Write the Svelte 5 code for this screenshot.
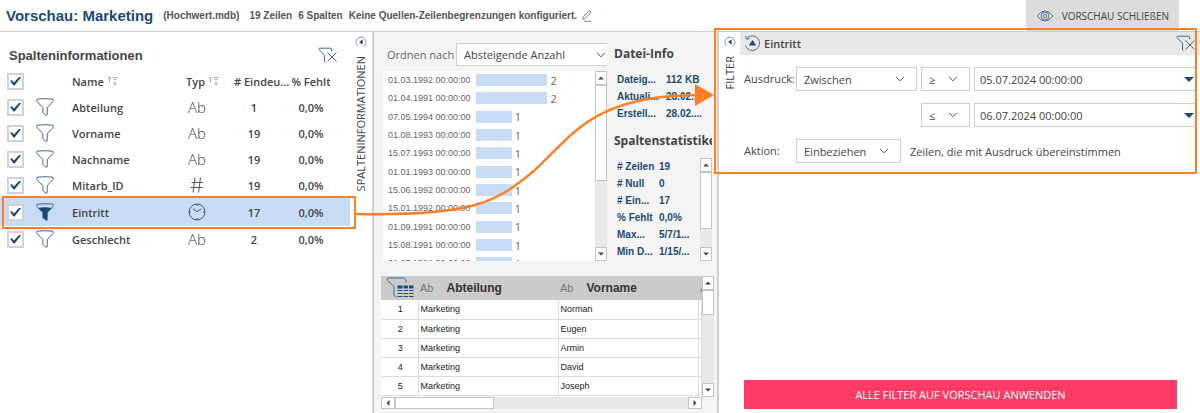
<script lang="ts">
  type Kind = 'text' | 'number' | 'date';

  let columns = $state([
    { name: 'Abteilung', kind: 'text' as Kind, unique: 1, missing: '0,0%', checked: true },
    { name: 'Vorname', kind: 'text' as Kind, unique: 19, missing: '0,0%', checked: true },
    { name: 'Nachname', kind: 'text' as Kind, unique: 19, missing: '0,0%', checked: true },
    { name: 'Mitarb_ID', kind: 'number' as Kind, unique: 19, missing: '0,0%', checked: true },
    { name: 'Eintritt', kind: 'date' as Kind, unique: 17, missing: '0,0%', checked: true },
    { name: 'Geschlecht', kind: 'text' as Kind, unique: 2, missing: '0,0%', checked: true },
  ]);
  let all_checked = $state(true);
  let selected = $state('Eintritt');
  let from_date = $state('05.07.2024 00:00:00');
  let to_date = $state('06.07.2024 00:00:00');

  const histogram = [
    { label: '01.03.1992 00:00:00', count: 2 },
    { label: '01.04.1991 00:00:00', count: 2 },
    { label: '07.05.1994 00:00:00', count: 1 },
    { label: '01.08.1993 00:00:00', count: 1 },
    { label: '15.07.1993 00:00:00', count: 1 },
    { label: '01.01.1993 00:00:00', count: 1 },
    { label: '15.06.1992 00:00:00', count: 1 },
    { label: '15.01.1992 00:00:00', count: 1 },
    { label: '01.09.1991 00:00:00', count: 1 },
    { label: '15.08.1991 00:00:00', count: 1 },
    { label: '01.07.1991 00:00:00', count: 1 },
  ];
  const max_count = 2;

  const file_info = [
    ['Dateig...', '112 KB'],
    ['Aktuali...', '28.02....'],
    ['Erstell...', '28.02....'],
  ];
  const stats = [
    ['# Zeilen', '19'],
    ['# Null', '0'],
    ['# Ein...', '17'],
    ['% Fehlt', '0,0%'],
    ['Max...', '5/7/1...'],
    ['Min D...', '1/15/...'],
  ];
  const people = ['Norman', 'Eugen', 'Armin', 'David', 'Joseph'];

  function toggleAll() {
    columns.forEach((c) => (c.checked = all_checked));
  }
</script>

{#snippet funnel(filled: boolean)}
  <svg class="funnel" viewBox="0 0 18 18" width="18" height="18">
    <path d="M1 1.2Q9 .2 17 1.2Q17.8 2.6 16.8 3.8L11.2 9.6V16.8Q11 17.6 10 17.2L7.4 15.2Q6.9 14.8 6.9 14V9.6L1.2 3.8Q.2 2.6 1 1.2Z" fill="none" stroke="#3f678f" />
    {#if filled}
      <path d="M2.2 5Q9 3.6 15.8 5L11.2 9.6V17.4L6.9 14.8V9.6Z" fill="#1c4a75" />
    {/if}
  </svg>
{/snippet}

{#snippet clearFilter()}
  <svg viewBox="0 0 20 17" width="20" height="17" fill="none" stroke="#45688c">
    <path d="M13.6 4.2V2Q13.4 1.2 12 1.2H1.6Q.8 1.2 1 2.6L6.5 8.2V14.8L7.5 15.6" />
    <path d="M9.5 5.5L18.5 14.5M18.5 5.5L9.5 14.5" />
  </svg>
{/snippet}

{#snippet sortIcon()}
  <svg class="sort" viewBox="0 0 12 10" width="12" height="10" fill="none" stroke="#8a9bad">
    <path d="M2.5 6.5V1M.8 2.7L2.5 1L4.2 2.7M5.5 1.5H10.5M6.5 3.5H9.5M8 5V9M6.3 7.3L8 9L9.7 7.3" stroke-width=".8" />
  </svg>
{/snippet}

{#snippet collapse(label: string)}
  <div class="strip">
    <button class="plain" aria-label={label}>
      <svg viewBox="0 0 12 12" width="12" height="12">
        <path d="M3 10.2A5 5 0 1 1 8.6 10.4" fill="none" stroke="#8398ad" />
        <path d="M7.6 3.2V8.8L4.2 6Z" fill="#1c4a75" />
      </svg>
    </button>
    <span>{label}</span>
  </div>
{/snippet}

{#snippet chevron()}
  <svg class="chevron" viewBox="0 0 10 6" width="10" height="6" fill="none" stroke="#555">
    <path d="M1 .8L5 4.8L9 .8" />
  </svg>
{/snippet}

{#snippet scrollbar(kind: string)}
  <div class="scrollbar {kind}" aria-hidden="true">
    <span class="cap"><svg viewBox="0 0 8 8" width="8" height="8"><path d="M1 5.5H7L4 2.5Z" fill="#444" /></svg></span>
    <span class="thumb"></span>
    <span class="cap end"><svg viewBox="0 0 8 8" width="8" height="8"><path d="M1 2.5H7L4 5.5Z" fill="#444" /></svg></span>
  </div>
{/snippet}

<div class="page">
  <header>
    <h1>Vorschau: Marketing</h1>
    <span class="file">(Hochwert.mdb)</span>
    <span class="rows">19 Zeilen</span>
    <span class="cols">6 Spalten</span>
    <span>Keine Quellen-Zeilenbegrenzungen konfiguriert.</span>
    <button class="plain edit" aria-label="Begrenzung bearbeiten">
      <svg viewBox="0 0 11 12" width="11" height="12" fill="none" stroke="#5b7b9c">
        <path d="M1.5 9.5L2.2 6.8L7.8 1.2Q8.6.6 9.4 1.3Q10.2 2.2 9.4 3L3.9 8.6L1.5 9.5M3 11.3H10" stroke-width=".9" />
      </svg>
    </button>
    <button class="close">
      <svg viewBox="0 0 18 12" width="18" height="12" fill="none" stroke="#54779b">
        <path d="M1 6Q4.6 1 9 1T17 6Q13.4 11 9 11T1 6Z" />
        <circle cx="9" cy="6" r="4" />
        <circle cx="9" cy="6" r="1.8" />
      </svg>
      VORSCHAU SCHLIEßEN
    </button>
  </header>

  <main>
    <section class="columns">
      <div class="columns-body">
        <div class="columns-title">
          <h2>Spalteninformationen</h2>
          <button class="plain" aria-label="Filter entfernen">{@render clearFilter()}</button>
        </div>
        <table class="column-table">
          <colgroup>
            <col class="c-check" /><col class="c-filter" /><col class="c-name" /><col class="c-type" /><col class="c-unique" /><col class="c-missing" /><col />
          </colgroup>
          <thead>
            <tr>
              <td><input type="checkbox" aria-label="Alle Spalten" bind:checked={all_checked} onchange={toggleAll} /></td>
              <td></td>
              <th class="name">Name {@render sortIcon()}</th>
              <th class="type">Typ {@render sortIcon()}</th>
              <th class="unique">#&nbsp;Eindeu...</th>
              <th>% Fehlt</th>
              <td></td>
            </tr>
          </thead>
          <tbody>
            {#each columns as c}
              <tr class:selected={c.name === selected} onclick={() => (selected = c.name)}>
                <td>
                  <input type="checkbox" aria-label={c.name} bind:checked={c.checked} />
                  {#if c.name === selected}<span class="callout"></span>{/if}
                </td>
                <td>{@render funnel(c.name === selected)}</td>
                <td class="name">{c.name}</td>
                <td class="kind">
                  {#if c.kind === 'text'}
                    Ab
                  {:else if c.kind === 'number'}
                    <svg viewBox="0 0 14 16" width="14" height="16" fill="none" stroke="#555">
                      <path d="M5 .5L3 15.5M10.5 .5L8.5 15.5M1.5 5.5H13M.5 10.5H12.5" />
                    </svg>
                  {:else}
                    <svg viewBox="0 0 18 18" width="18" height="18" fill="none" stroke="#44566b">
                      <circle cx="9" cy="9" r="8" />
                      <path d="M5 5.8L9 8.8L13 6M9 1V3M9 15V17M1 9H3M15 9H17" />
                    </svg>
                  {/if}
                </td>
                <td>{c.unique}</td>
                <td>{c.missing}</td>
                <td></td>
              </tr>
            {/each}
          </tbody>
        </table>
      </div>
      {@render collapse('SPALTENINFORMATIONEN')}
    </section>

    <section class="details">
      <div class="upper">
        <div class="chart">
          <div class="order">
            <label for="order">Ordnen nach</label>
            <div class="select">
              <select id="order"><option>Absteigende Anzahl</option></select>
              {@render chevron()}
            </div>
          </div>
          <div class="histogram">
            <div class="bars">
              {#each histogram as h}
                <div class="bar-row">
                  <span class="bar-label">{h.label}</span>
                  <span class="track">
                    <span class="bar" style="width: {(h.count / max_count) * 60}%"></span>
                    {h.count}
                  </span>
                </div>
              {/each}
            </div>
            {@render scrollbar('chart-scroll')}
          </div>
        </div>

        <div class="info">
          <h3>Datei-Info</h3>
          <table class="facts file-facts">
            <tbody>
              {#each file_info as [key, value]}
                <tr><th>{key}</th><td>{value}</td></tr>
              {/each}
            </tbody>
          </table>
          <h3>Spaltenstatistiken</h3>
          <div class="stats">
            <table class="facts">
              <tbody>
                {#each stats as [key, value]}
                  <tr><th>{key}</th><td>{value}</td></tr>
                {/each}
              </tbody>
            </table>
            {@render scrollbar('stats-scroll')}
          </div>
        </div>
      </div>

      <div class="preview">
        <div class="preview-clip">
          <table class="preview-table">
            <colgroup><col class="p-index" /><col class="p-wide" /><col class="p-wide" /><col /></colgroup>
            <thead>
              <tr>
                <th class="corner">
                  <svg viewBox="0 0 28 22" width="28" height="22">
                    <path d="M20 5.5Q20.5 1.5 18 1H2.5Q.5 1 1.2 3L8 9.5V18L10 20.5" fill="none" stroke="#3f678f" />
                    <path d="M11.5 8.5H16.5V11.5H11.5ZM17.5 8.5H22V11.5H17.5ZM23 8.5H27.5V11.5H23Z" fill="#1c4a75" />
                    <path d="M11.5 13.5H16.5M17.5 13.5H22M23 13.5H27.5M11.5 16.5H16.5M17.5 16.5H22M23 16.5H27.5M11.5 19.5H16.5M17.5 19.5H22M23 19.5H27.5" stroke="#1c4a75" />
                  </svg>
                </th>
                <th><span>Ab</span>Abteilung</th>
                <th><span>Ab</span>Vorname</th>
                <th><span>Ab</span></th>
              </tr>
            </thead>
            <tbody>
              {#each people as person, i}
                <tr><td class="index">{i + 1}</td><td>Marketing</td><td>{person}</td><td></td></tr>
              {/each}
            </tbody>
          </table>
        </div>
        {@render scrollbar('table-scroll')}
        <div class="scrollbar horizontal" aria-hidden="true">
          <span class="cap"><svg viewBox="0 0 8 8" width="8" height="8"><path d="M5.5 1V7L2.5 4Z" fill="#444" /></svg></span>
          <span class="thumb"></span>
          <span class="cap end"><svg viewBox="0 0 8 8" width="8" height="8"><path d="M2.5 1V7L5.5 4Z" fill="#444" /></svg></span>
        </div>
      </div>
    </section>

    <section class="filter">
      {@render collapse('FILTER')}
      <div class="filter-body">
        <div class="filter-title">
          <button class="plain" aria-label="Zuklappen">
            <svg viewBox="0 0 17 17" width="17" height="17">
              <path d="M2.6 3.6A7.3 7.3 0 1 1 1.4 10.5M1.5 1.2L2.4 4.2L5.6 3.6" fill="none" stroke="#54708f" />
              <path d="M8.5 5L12.2 10.5H4.8Z" fill="#1c4a75" />
            </svg>
          </button>
          <h2>Eintritt</h2>
          <button class="plain" aria-label="Filter entfernen">{@render clearFilter()}</button>
        </div>
        <form onsubmit={(e) => e.preventDefault()}>
          <label for="expression">Ausdruck:</label>
          <div class="fields">
            <div class="select">
              <select id="expression"><option>Zwischen</option></select>
              {@render chevron()}
            </div>
            <div class="select">
              <select aria-label="Untere Grenze"><option>≥</option></select>
              {@render chevron()}
            </div>
            <div class="select date">
              <input aria-label="Von" bind:value={from_date} />
              <svg class="chevron" viewBox="0 0 10 5" width="10" height="5"><path d="M0 0H10L5 5Z" fill="#1c4a75" /></svg>
            </div>
            <div class="select second">
              <select aria-label="Obere Grenze"><option>≤</option></select>
              {@render chevron()}
            </div>
            <div class="select date">
              <input aria-label="Bis" bind:value={to_date} />
              <svg class="chevron" viewBox="0 0 10 5" width="10" height="5"><path d="M0 0H10L5 5Z" fill="#1c4a75" /></svg>
            </div>
          </div>
          <label for="action">Aktion:</label>
          <div class="action">
            <div class="select">
              <select id="action"><option>Einbeziehen</option></select>
              {@render chevron()}
            </div>
            <span>Zeilen, die mit Ausdruck übereinstimmen</span>
          </div>
        </form>
        <button class="apply">ALLE FILTER AUF VORSCHAU ANWENDEN</button>
      </div>
      <span class="callout"></span>
    </section>

    <!-- arrow from the selected column to its filter -->
    <svg class="arrow" viewBox="0 0 360 140" width="360" height="140">
      <path d="M0 134C114 136 139 124 179 90C219 52 239 16 341 15" fill="none" stroke="#ff7f27" stroke-width="2.4" />
      <path d="M339 4L358 15L339 26Z" fill="#ff7f27" />
    </svg>
  </main>
</div>

<style>
  :global(body) {
    margin: 0;
    background: #fff;
  }
  .page {
    --blue: #1c4a75;
    --bar: #c8ddf5;
    --orange: #ff7f27;
    --line: #cfcfcf;
    min-height: 100vh;
    display: flex;
    flex-direction: column;
    font-family: "Open Sans", "Noto Sans", sans-serif;
    font-size: 11px;
    color: #444;
    overflow: hidden;
  }
  h1, h2, h3 {
    margin: 0;
  }
  table {
    border-collapse: collapse;
    border-spacing: 0;
  }
  td, th {
    padding: 0;
  }
  button, select, input {
    font: inherit;
    color: inherit;
  }
  svg {
    display: block;
    flex: none;
  }
  .plain {
    border: 0;
    padding: 0;
    background: none;
  }

  header {
    display: flex;
    align-items: center;
    height: 32px;
    padding-left: 6px;
    border-bottom: 1px solid var(--line);
    box-sizing: border-box;
    font-family: "Liberation Sans", Arial, sans-serif;
    font-size: 10px;
    font-weight: 700;
    color: #555;
    white-space: nowrap;
  }
  h1 {
    font-size: 15px;
    color: var(--blue);
  }
  .file {
    margin: 0 10px;
  }
  .rows, .cols {
    margin-right: 6px;
  }
  .edit {
    margin-left: 4px;
  }
  .close {
    align-self: stretch;
    display: flex;
    align-items: center;
    gap: 8px;
    margin: 0 21px 0 auto;
    padding: 0 10px;
    border: 0;
    background: #dcdcdc;
    font-family: "Open Sans", "Noto Sans", sans-serif;
    font-size: 10px;
    font-weight: 400;
    color: #444;
  }

  main {
    position: relative;
    flex: 1;
    display: grid;
    grid-template-columns: 374px 343px 1fr;
  }

  .columns {
    display: flex;
    border-right: 2px solid var(--line);
  }
  .columns-body {
    flex: 1;
  }
  .columns-title {
    display: flex;
    justify-content: space-between;
    align-items: center;
    padding: 10px 12px 0 9px;
    height: 26px;
  }
  .columns-title h2 {
    font-size: 13px;
    font-family: "Liberation Sans", Arial, sans-serif;
  }
  .column-table {
    width: 100%;
    table-layout: fixed;
    text-align: center;
    font-weight: 600;
  }
  .c-check, .c-filter { width: 36px; }
  .c-name { width: 98px; }
  .c-type, .c-missing { width: 54px; }
  .c-unique { width: 60px; }
  .column-table tr {
    height: 26px;
    position: relative;
  }
  .column-table th {
    font-weight: 600;
    white-space: nowrap;
  }
  .column-table .name {
    text-align: left;
  }
  .column-table .unique {
    padding-left: 10px;
  }
  .column-table .type {
    padding-left: 12px;
  }
  .column-table td > svg {
    margin: 0 auto;
  }
  .column-table td > .funnel {
    margin-left: 0;
  }
  .column-table tr.selected {
    height: 28px;
    background: var(--bar);
  }
  .column-table .kind {
    font-size: 15px;
    font-weight: 300;
    line-height: 20px;
  }
  .sort {
    display: inline-block;
  }
  .column-table input {
    display: grid;
    place-items: center;
    appearance: none;
    width: 17px;
    height: 17px;
    margin: 0 0 0 7px;
    border: 2px solid #d2d2d2;
    background: #fff;
  }
  .column-table input:checked::before {
    content: "";
    width: 11px;
    height: 9px;
    background: var(--blue);
    clip-path: polygon(0 48%, 18% 42%, 36% 66%, 86% 0, 100% 8%, 42% 100%, 32% 100%);
  }
  .callout {
    position: absolute;
    z-index: 2;
    border: 2px solid var(--orange);
    pointer-events: none;
  }
  .selected .callout {
    inset: -2px -6px -3px 2px;
  }

  .strip {
    width: 22px;
    flex: none;
    display: flex;
    flex-direction: column;
    align-items: center;
    gap: 8px;
    padding-top: 4px;
  }
  .strip span {
    writing-mode: vertical-rl;
    transform: rotate(180deg);
    font-size: 11px;
    line-height: 16px;
  }

  .details {
    min-width: 0;
    padding: 0 3px 0 7px;
    background: #f4f4f4;
  }
  .upper {
    display: flex;
    gap: 7px;
    height: 229px;
    padding-left: 2px;
  }
  .chart {
    width: 224px;
    display: flex;
    flex-direction: column;
  }
  .order {
    display: flex;
    align-items: center;
    justify-content: space-between;
    padding: 11px 0 5px 4px;
  }
  .order label {
    color: #666;
    white-space: nowrap;
  }
  .select {
    position: relative;
    display: flex;
    align-items: center;
  }
  .select select, .select input {
    appearance: none;
    width: 100%;
    height: 24px;
    padding: 0 7px;
    border: 1px solid var(--line);
    border-radius: 0;
    background: #fff;
    box-sizing: border-box;
  }
  .chevron {
    position: absolute;
    right: 12px;
    pointer-events: none;
  }
  .order .select {
    width: 151px;
  }
  .order .select select {
    height: 23px;
    border-right: 0;
  }
  .order .chevron {
    right: 1px;
  }
  .histogram {
    flex: 1;
    min-height: 0;
    display: flex;
    background: #fff;
  }
  .bars {
    flex: 1;
    overflow: hidden;
  }
  .bar-row {
    display: flex;
    align-items: center;
    height: 18px;
  }
  .bar-row:nth-child(3n) {
    height: 19px;
  }
  .bar-label {
    width: 88px;
    padding-left: 5px;
    font-family: "Liberation Sans", Arial, sans-serif;
    font-size: 9px;
    color: #666;
  }
  .track {
    flex: 1;
    display: flex;
    align-items: center;
    gap: 3px;
    color: #666;
  }
  .bar {
    height: 12px;
    background: var(--bar);
  }

  .info {
    flex: 1;
    min-width: 0;
    display: flex;
    flex-direction: column;
    padding-right: 2px;
  }
  .info h3 {
    height: 18px;
    padding-top: 13px;
    font-size: 12px;
    line-height: 18px;
    overflow: hidden;
  }
  .info h3:not(:first-child) {
    padding-top: 10px;
    margin-bottom: 8px;
  }
  .file-facts {
    margin-top: 8px;
  }
  .facts {
    margin-left: 3px;
    font-family: "Liberation Sans", Arial, sans-serif;
    font-size: 10px;
    font-weight: 700;
    line-height: 17px;
    color: var(--blue);
    white-space: nowrap;
  }
  .facts th {
    width: 42px;
    text-align: left;
  }
  .file-facts th {
    width: 49px;
  }
  .stats {
    flex: 1;
    min-height: 0;
    display: flex;
    justify-content: space-between;
    align-items: stretch;
  }
  .stats .facts {
    align-self: flex-start;
  }

  .scrollbar {
    width: 12px;
    flex: none;
    display: flex;
    flex-direction: column;
    background: #e8e8e8;
  }
  .cap, .thumb {
    flex: none;
    box-sizing: border-box;
    border: 1px solid #c4c4c4;
    background: #fff;
  }
  .cap {
    display: grid;
    place-items: center;
    height: 14px;
  }
  .end {
    margin-top: auto;
  }
  .chart-scroll .thumb { height: 96px; }
  .stats-scroll .thumb { height: 57px; }
  .table-scroll .thumb { height: 25px; }

  .preview {
    display: grid;
    grid-template-columns: 1fr 12px;
    grid-template-rows: 121px 12px;
    margin-top: 15px;
  }
  .preview-clip {
    overflow: hidden;
    background: #fff;
  }
  .preview-table {
    width: 100%;
    table-layout: fixed;
    font-family: "Liberation Sans", Arial, sans-serif;
    font-size: 9px;
    color: #222;
  }
  .p-index { width: 37px; }
  .p-wide { width: 140px; }
  .preview-table thead tr {
    height: 24px;
    background: #cbcbcb;
  }
  .preview-table th {
    font-size: 12px;
    text-align: left;
    color: #333;
    overflow: hidden;
    white-space: nowrap;
  }
  .preview-table th span {
    margin: 0 13px 0 2px;
    font-size: 11px;
    font-weight: 400;
    color: #777;
  }
  .corner svg {
    margin-left: 5px;
  }
  .preview-table tbody tr {
    height: 19px;
  }
  .preview-table td {
    padding-left: 2px;
    border-right: 1px solid #ddd;
    border-bottom: 1px solid #ddd;
  }
  .preview-table .index {
    text-align: center;
  }
  .horizontal {
    width: auto;
    flex-direction: row;
  }
  .horizontal .cap {
    width: 14px;
    height: 12px;
  }
  .horizontal .thumb {
    width: 99px;
  }
  .horizontal .end {
    margin: 0 0 0 auto;
  }

  .filter {
    position: relative;
    display: flex;
    border-left: 2px solid var(--line);
  }
  .filter > .callout {
    inset: -4px 3px auto -5px;
    height: 142px;
  }
  .filter .strip {
    width: 21px;
  }
  .filter-body {
    flex: 1;
    display: flex;
    flex-direction: column;
  }
  .filter-title {
    display: flex;
    align-items: center;
    gap: 3px;
    height: 23px;
    padding: 0 4px;
    background: #e9e9e9;
  }
  .filter-title h2 {
    flex: 1;
    font-size: 11px;
    font-weight: 600;
  }
  form {
    display: grid;
    grid-template-columns: 52px 1fr;
    row-gap: 12px;
    padding: 12px 3px 0 4px;
  }
  form label {
    line-height: 24px;
  }
  .fields {
    display: grid;
    grid-template-columns: 121px 49px 1fr;
    gap: 12px 4px;
  }
  .second {
    grid-column: 2;
  }
  .date .chevron {
    right: 3px;
  }
  .date input {
    padding: 0 5px;
  }
  .action {
    display: flex;
    align-items: center;
    gap: 9px;
  }
  .action .select {
    width: 105px;
  }
  .apply {
    margin: auto 23px 4px 4px;
    height: 29px;
    border: 0;
    background: #ff3b66;
    color: #fff;
  }

  .arrow {
    position: absolute;
    z-index: 3;
    left: 356px;
    top: 48px;
    pointer-events: none;
  }
</style>
